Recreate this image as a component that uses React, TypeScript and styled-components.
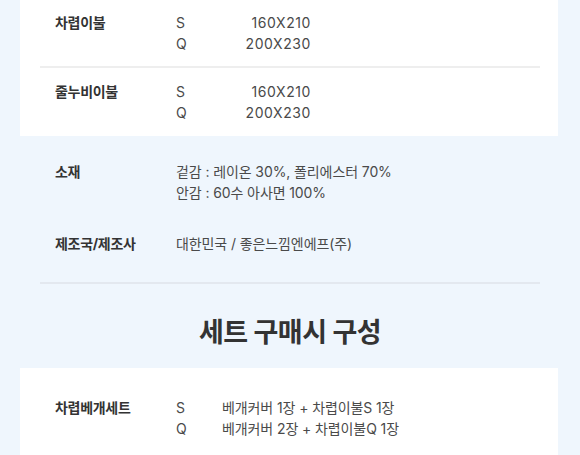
import React from 'react';
import styled, { createGlobalStyle } from 'styled-components';

const GlobalStyle = createGlobalStyle`
  html, body {
    margin: 0;
    padding: 0;
    background: #eff6fd;
    font-family: Inter, "Noto Sans CJK KR", "Noto Sans", sans-serif;
    color: #333;
  }
`;

const Page = styled.div`
  width: 580px;
  height: 455px;
  overflow: hidden;
  display: flex;
  flex-direction: column;
`;

const Card = styled.div`
  background: #fff;
  margin: 0 22px 0 20px;
  padding: 0 18px 0 20px;
`;

const Plain = styled.div`
  margin: 0 22px 0 20px;
  padding: 25px 18px 0 20px;
`;

const Divider = styled.div<{ $blue?: boolean }>`
  height: 2px;
  background: ${(p) => (p.$blue ? '#e3e8ef' : '#eeeeee')};
`;

const Row = styled.div<{ $top: number; $bottom: number }>`
  display: grid;
  grid-template-columns: 121px 46px auto;
  align-items: start;
  padding: ${(p) => p.$top}px 0 ${(p) => p.$bottom}px 15px;
  font-size: 14px;
  line-height: 21px;
`;

const Label = styled.div`
  font-weight: 700;
  color: #333;
  letter-spacing: -0.3px;
`;

const Lines = styled.div<{ $span?: boolean }>`
  display: flex;
  flex-direction: column;
  grid-column: ${(p) => (p.$span ? '2 / 4' : 'auto')};
  color: #4a4a4a;
  letter-spacing: -0.1px;
`;

const Dims = styled(Lines)`
  width: 89px;
  text-align: right;
  letter-spacing: 0.6px;
`;

const Title = styled.h2`
  margin: 33px 0 19px;
  text-align: center;
  font-size: 27px;
  line-height: 32px;
  font-weight: 700;
  color: #333;
  letter-spacing: -0.5px;
`;

const sizes = [
  { name: '차렵이불', s: '160X210', q: '200X230' },
  { name: '줄누비이불', s: '160X210', q: '200X230' },
];

export default function App() {
  return (
    <Page>
      <GlobalStyle />
      <Card>
        {sizes.map((item, i) => (
          <React.Fragment key={item.name}>
            {i > 0 && <Divider />}
            <Row $top={i === 0 ? 12 : 13} $bottom={i === 0 ? 12 : 13}>
              <Label>{item.name}</Label>
              <Lines>
                <span>S</span>
                <span>Q</span>
              </Lines>
              <Dims>
                <span>{item.s}</span>
                <span>{item.q}</span>
              </Dims>
            </Row>
          </React.Fragment>
        ))}
      </Card>
      <Plain>
        <Row $top={0} $bottom={30}>
          <Label>소재</Label>
          <Lines $span>
            <span>겉감 : 레이온 30%, 폴리에스터 70%</span>
            <span>안감 : 60수 아사면 100%</span>
          </Lines>
        </Row>
        <Row $top={0} $bottom={28}>
          <Label>제조국/제조사</Label>
          <Lines $span>
            <span>대한민국 / 좋은느낌엔에프(주)</span>
          </Lines>
        </Row>
        <Divider $blue />
      </Plain>
      <Title>세트 구매시 구성</Title>
      <Card>
        <Row $top={29} $bottom={20}>
          <Label>차렵베개세트</Label>
          <Lines>
            <span>S</span>
            <span>Q</span>
          </Lines>
          <Lines>
            <span>베개커버 1장 + 차렵이불S 1장</span>
            <span>베개커버 2장 + 차렵이불Q 1장</span>
          </Lines>
        </Row>
      </Card>
    </Page>
  );
}
